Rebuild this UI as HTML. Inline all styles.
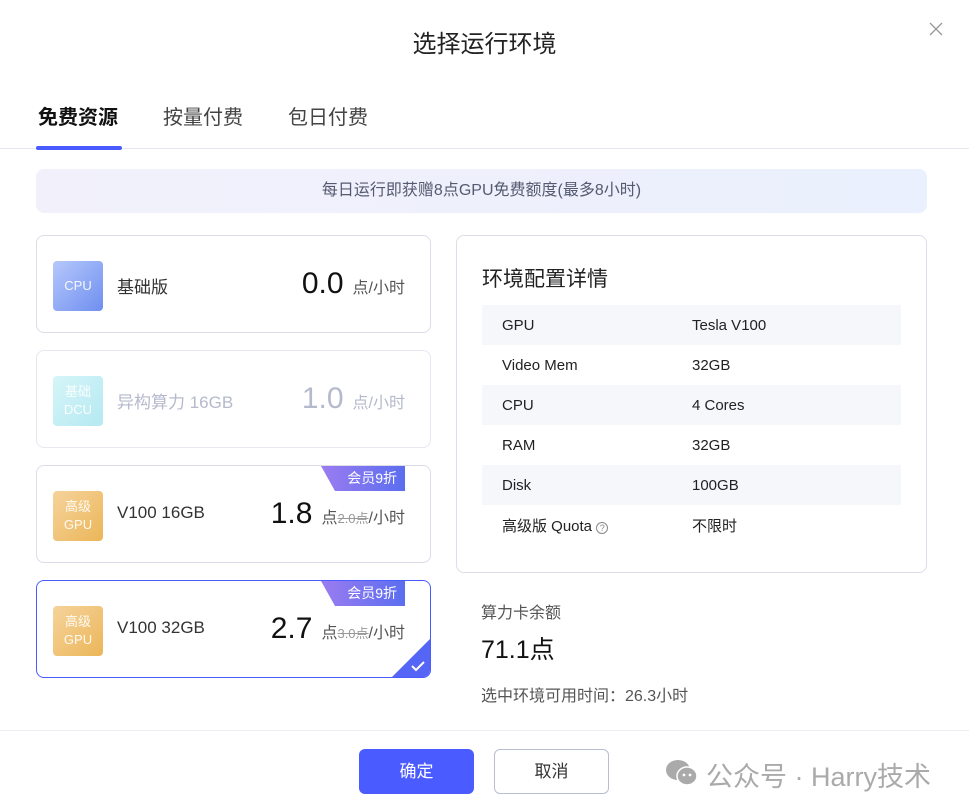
<!DOCTYPE html>
<html><head><meta charset="utf-8"><style>
*{margin:0;padding:0;box-sizing:border-box}
body{width:969px;height:811px;background:#fff;font-family:"Liberation Sans","Noto Sans CJK SC",sans-serif;position:relative;overflow:hidden;color:#222}
.abs{position:absolute}
.card{position:absolute;left:36px;width:395px;height:98px;border:1px solid #dcdde8;border-radius:8px;background:#fff;overflow:hidden}
.ic{position:absolute;left:16px;top:25px;width:50px;height:50px;border-radius:4px;color:rgba(255,255,255,.9);font-size:13px;text-align:center;display:flex;flex-direction:column;justify-content:center;line-height:18px}
.nm{position:absolute;left:80px;top:37px;font-size:17px;color:#333}
.pr{position:absolute;right:25px;top:31px;font-size:16px;color:#555;white-space:nowrap}
.pr b{font-weight:normal;font-size:30px;color:#111;margin-right:9px}
.pr s{color:#999;font-size:13px}
.tag{position:absolute;right:25px;top:0;width:84px;height:25px;background:linear-gradient(90deg,#9b7cf0,#5b6ef0);clip-path:polygon(0 0,100% 0,100% 100%,14px 100%);color:#fff;font-size:14px;text-align:right;padding-right:8px;line-height:24px}
table{border-collapse:collapse;width:419px;position:absolute;left:25px;top:69px;font-size:15px;color:#222}
td{height:40px;padding-left:20px}
tr:nth-child(odd){background:#f6f7fb}
</style></head><body>
<div class="abs" style="left:0;top:24px;width:969px;text-align:center;font-size:24px;color:#222">选择运行环境</div>
<svg class="abs" style="left:929px;top:22px" width="14" height="14" viewBox="0 0 14 14"><path d="M1 1l12 12M13 1L1 13" stroke="#999" stroke-width="1.3"/></svg>
<div class="abs" style="left:38px;top:101px;font-size:20px;font-weight:bold;color:#111">免费资源</div>
<div class="abs" style="left:163px;top:101px;font-size:20px;color:#444">按量付费</div>
<div class="abs" style="left:288px;top:101px;font-size:20px;color:#444">包日付费</div>
<div class="abs" style="left:0;top:148px;width:969px;height:1px;background:#e4e7f0"></div>
<div class="abs" style="left:36px;top:146px;width:86px;height:4px;border-radius:2px;background:#4a5bff"></div>
<div class="abs" style="left:36px;top:169px;width:891px;height:44px;border-radius:8px;background:linear-gradient(90deg,#f2f1fb,#eaf0fd);text-align:center;line-height:44px;font-size:16px;color:#555a70">每日运行即获赠8点GPU免费额度(最多8小时)</div>

<div class="card" style="top:235px"><div class="ic" style="background:linear-gradient(135deg,#b6c8fb,#6f8ff0)">CPU</div><div class="nm">基础版</div><div class="pr"><b>0.0</b>点/小时</div></div>
<div class="card" style="top:350px;border-color:#e6e7f0"><div class="ic" style="background:linear-gradient(135deg,#d5f5f8,#b5e9f2)">基础<br>DCU</div><div class="nm" style="color:#b5b9cc">异构算力 16GB</div><div class="pr" style="color:#b5b9cc"><b style="color:#b5b9cc">1.0</b>点/小时</div></div>
<div class="card" style="top:465px"><div class="tag">会员9折</div><div class="ic" style="background:linear-gradient(135deg,#f6d39c,#ebb658)">高级<br>GPU</div><div class="nm">V100 16GB</div><div class="pr"><b>1.8</b>点<s>2.0点</s>/小时</div></div>
<div class="card" style="top:580px;border-color:#4a5bff"><div class="tag">会员9折</div><div class="ic" style="background:linear-gradient(135deg,#f6d39c,#ebb658)">高级<br>GPU</div><div class="nm">V100 32GB</div><div class="pr"><b>2.7</b>点<s>3.0点</s>/小时</div>
<div class="abs" style="right:0;bottom:0;width:38px;height:38px;background:#5565f5;clip-path:polygon(100% 0,100% 100%,0 100%)"></div>
<svg class="abs" style="right:4px;bottom:5px" width="16" height="12" viewBox="0 0 16 12"><path d="M2 6l4 4 8-8" stroke="#fff" stroke-width="2" fill="none"/></svg></div>

<div class="abs" style="left:456px;top:235px;width:471px;height:338px;border:1px solid #dcdde8;border-radius:8px">
<div class="abs" style="left:25px;top:27px;font-size:21px;color:#222">环境配置详情</div>
<table>
<tr><td style="width:190px">GPU</td><td>Tesla V100</td></tr>
<tr><td>Video Mem</td><td>32GB</td></tr>
<tr><td>CPU</td><td>4 Cores</td></tr>
<tr><td>RAM</td><td>32GB</td></tr>
<tr><td>Disk</td><td>100GB</td></tr>
<tr><td>高级版 Quota <span style="display:inline-block;width:12px;height:12px;border:1px solid #888;border-radius:50%;font-size:9px;line-height:10px;text-align:center;color:#888">?</span></td><td>不限时</td></tr>
</table></div>
<div class="abs" style="left:481px;top:599px;font-size:16px;color:#555">算力卡余额</div>
<div class="abs" style="left:481px;top:630px;font-size:25px;color:#111">71.1点</div>
<div class="abs" style="left:481px;top:682px;font-size:16px;color:#555">选中环境可用时间：26.3小时</div>

<div class="abs" style="left:0;top:730px;width:969px;height:1px;background:#eceef3"></div>
<div class="abs" style="left:359px;top:749px;width:115px;height:45px;border-radius:6px;background:#4a5bff;color:#fff;font-size:17px;text-align:center;line-height:45px">确定</div>
<div class="abs" style="left:494px;top:749px;width:115px;height:45px;border-radius:6px;border:1px solid #b9bdd0;color:#333;font-size:17px;text-align:center;line-height:43px">取消</div>
<svg class="abs" style="left:665px;top:759px" width="34" height="28" viewBox="0 0 34 28"><ellipse cx="13" cy="11" rx="12" ry="10" fill="#aaa"/><ellipse cx="22" cy="17" rx="10" ry="9" fill="#aaa" stroke="#fff" stroke-width="1.5"/><circle cx="19" cy="16" r="1.4" fill="#fff"/><circle cx="25" cy="16" r="1.4" fill="#fff"/></svg>
<div class="abs" style="left:706px;top:755px;font-size:27px;color:#aaa;white-space:nowrap">公众号 · Harry技术</div>
</body></html>
